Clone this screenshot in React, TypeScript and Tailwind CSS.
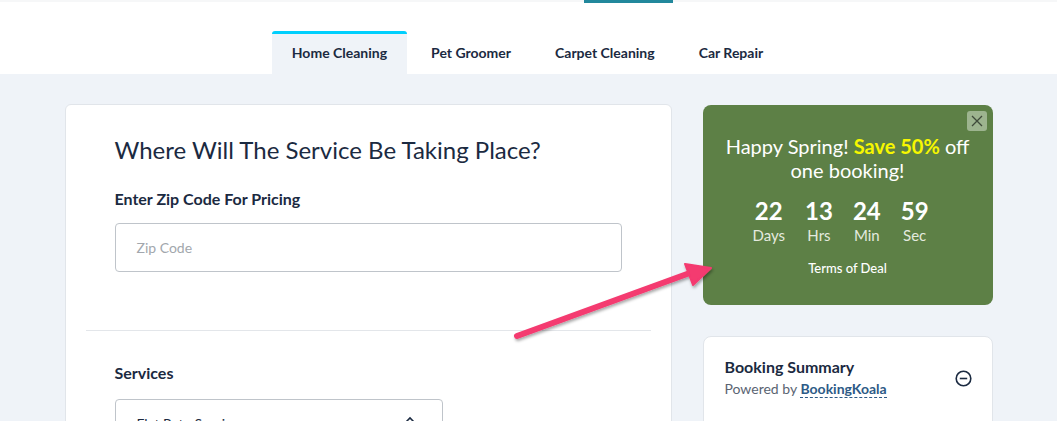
import React from "react";

const tabs = ["Home Cleaning", "Pet Groomer", "Carpet Cleaning", "Car Repair"];

function Countdown({ n, label }: { n: string; label: string }) {
  return (
    <div className="flex flex-col items-center">
      <span className="text-[24px] leading-[28px] font-bold text-white">{n}</span>
      <span className="text-[15px] leading-[20px] text-[#e4eadf]">{label}</span>
    </div>
  );
}

export default function App() {
  return (
    <div
      className="relative min-h-[421px] w-full overflow-hidden bg-[#eff3f8] text-[#1b2a41]"
      style={{ fontFamily: "Lato, 'Noto Sans', 'Liberation Sans', sans-serif" }}
    >
      {/* header strip */}
      <div className="bg-white">
        <div className="h-[2px] bg-[#f6f7f8]" />
        <div className="-mt-[2px] ml-[584px] h-[3px] w-[89px] bg-[#22889c]" />
        <div className="flex justify-center gap-1 pt-[28px] pr-[2px]">
          {tabs.map((t, i) => (
            <div
              key={t}
              className={
                i === 0
                  ? "flex h-[43px] items-center rounded-t-[3px] border-t-[3px] border-[#00cffd] bg-[#eff3f8] px-5 pb-1 text-[14px] font-bold"
                  : "flex h-[43px] items-center border-t-[3px] border-transparent px-5 pb-1 text-[14px] font-bold"
              }
            >
              {t}
            </div>
          ))}
        </div>
      </div>

      {/* main */}
      <div className="mx-auto flex w-[928px] gap-[31px] pt-[30px]">
        <div className="w-[607px] rounded-[6px] border border-[#e1e5ea] bg-white pb-10">
          <div className="px-[49px] pt-[29px] pb-[58px]">
            <h1 className="text-[24px] leading-[32px] font-normal">Where Will The Service Be Taking Place?</h1>
            <h2 className="mt-[21px] text-[16px] leading-[24px] font-bold">Enter Zip Code For Pricing</h2>
            <div className="mt-3 flex h-[49px] w-[507px] items-center rounded-[4px] border border-[#bfc4ca] px-[21px] text-[14px] text-[#a2a7ad]">
              Zip Code
            </div>
          </div>
          <div className="mx-5 h-px bg-[#e3e6ea]" />
          <div className="px-[49px] pt-[30px]">
            <h2 className="text-[16px] leading-[24px] font-bold">Services</h2>
            <div className="mt-[14px] flex h-[49px] w-[328px] items-center justify-between rounded-[4px] border border-[#bfc4ca] pr-[26px] pl-[21px] text-[14px] text-[#1b2a41]">
              <span>Flat Rate Services</span>
              <svg width="12" height="16" viewBox="0 0 12 16" fill="none" stroke="#1b2a41" strokeWidth="1.6">
                <path d="M2 6l4-4 4 4M2 10l4 4 4-4" />
              </svg>
            </div>
          </div>
        </div>

        <div className="flex w-[290px] flex-col gap-[31px]">
          <div className="relative mt-px flex h-[200px] flex-col items-center rounded-[8px] bg-[#5d8046] pt-[29px] text-white">
            <button className="absolute top-[6px] right-[6px] flex h-5 w-5 items-center justify-center rounded-[3px] bg-[#9db48f]">
              <svg width="12" height="12" viewBox="0 0 12 12" stroke="#3f4a3a" strokeWidth="1.3">
                <path d="M1 1l10 10M11 1L1 11" />
              </svg>
            </button>
            <p className="text-center text-[20px] leading-[24px]">
              Happy Spring! <span className="font-bold text-[#f7f700]">Save 50%</span> off
              <br />
              one booking!
            </p>
            <div className="mt-[15px] mr-[14px] flex gap-[20px]">
              <Countdown n="22" label="Days" />
              <Countdown n="13" label="Hrs" />
              <Countdown n="24" label="Min" />
              <Countdown n="59" label="Sec" />
            </div>
            <p className="mt-[14px] text-[13px] leading-[18px] font-medium">Terms of Deal</p>
          </div>

          <div className="flex h-[120px] items-start justify-between rounded-[8px] border border-[#e1e5ea] bg-white pt-[18px] pr-[20px] pl-[21px]">
            <div>
              <h3 className="text-[16px] leading-[24px] font-bold">Booking Summary</h3>
              <p className="text-[14px] leading-[20px] text-[#5a6472]">
                Powered by{" "}
                <span className="border-b border-dashed border-[#2d5a86] font-bold text-[#2d5a86]">
                  BookingKoala
                </span>
              </p>
            </div>
            <svg className="mt-[15px]" width="17" height="17" viewBox="0 0 17 17" fill="none" stroke="#1b2a41" strokeWidth="1.6">
              <circle cx="8.5" cy="8.5" r="7.3" />
              <path d="M4.8 8.5h7.4" />
            </svg>
          </div>
        </div>
      </div>

      {/* annotation arrow */}
      <svg className="pointer-events-none absolute top-0 left-0" width="1057" height="421" viewBox="0 0 1057 421">
        <defs>
          <filter id="sh" x="-20%" y="-20%" width="140%" height="140%">
            <feDropShadow dx="1" dy="2" stdDeviation="1.5" floodColor="#000" floodOpacity="0.35" />
          </filter>
        </defs>
        <g filter="url(#sh)">
          <path d="M517 336L698 270" stroke="#f43a70" strokeWidth="6" strokeLinecap="round" />
          <path d="M685 264L711 268L693 285Z" fill="#f43a70" stroke="#f43a70" strokeWidth="2" strokeLinejoin="round" />
        </g>
      </svg>
    </div>
  );
}
